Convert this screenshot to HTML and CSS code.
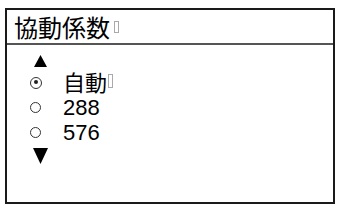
FILE: index.html
```html
<!DOCTYPE html>
<html lang="ja">
<head>
  <meta charset="UTF-8">
  <title>協動係数</title>
  <link rel="stylesheet" href="styles.css">
</head>
<body>
  <div class="panel">
    <div class="panel-title">
      <span>協動係数</span><span class="tofu"></span>
    </div>
    <div class="panel-body">
      <svg class="arrow arrow-up" width="13" height="12" viewBox="0 0 13 12"><polygon points="6.5,0 13,12 0,12" fill="#000"/></svg>
      <ul class="options">
        <li class="option selected"><span class="radio"></span><span class="label jp">自動</span><span class="tofu small"></span></li>
        <li class="option"><span class="radio"></span><span class="label">288</span></li>
        <li class="option"><span class="radio"></span><span class="label">576</span></li>
      </ul>
      <svg class="arrow arrow-down" width="15" height="16" viewBox="0 0 15 16"><polygon points="0,0 15,0 7.5,16" fill="#000"/></svg>
    </div>
  </div>
</body>
</html>
```

FILE: styles.css
```css
body {
  margin: 0;
  background: #fff;
  font-family: "Liberation Sans", "Noto Sans CJK JP", sans-serif;
  color: #111;
}

.panel {
  margin: 8px 0 0 5px;
  width: 326px;
  height: 192px;
  border: 2px solid #1a1a1a;
  display: flex;
  flex-direction: column;
}

.panel-title {
  height: 33px;
  border-bottom: 2px solid #555;
  display: flex;
  align-items: center;
  padding-left: 7px;
  font-family: "Noto Sans CJK JP", sans-serif;
  font-size: 24px;
  line-height: 1;
  color: #000;
}

.tofu {
  display: inline-block;
  width: 3px;
  height: 10px;
  border: 1px solid #aaa;
  margin-left: 4px;
}

.tofu.small {
  height: 12px;
  margin: 0 0 4px 1px;
}

.panel-body {
  padding: 10px 0 0 23px;
  display: flex;
  flex-direction: column;
}

.arrow-up {
  margin-left: 4px;
  margin-bottom: 3px;
}

.options {
  list-style: none;
  margin: 0;
  padding: 0;
}

.option {
  display: flex;
  align-items: center;
  height: 25px;
}

.radio {
  box-sizing: border-box;
  width: 11px;
  height: 11px;
  border: 1.5px solid #333;
  border-radius: 50%;
  margin-right: 22px;
  position: relative;
}

.selected .radio {
  width: 12px;
  height: 12px;
  margin-right: 21px;
}

.selected .radio::after {
  content: "";
  position: absolute;
  left: 2.5px;
  top: 2.5px;
  width: 4px;
  height: 4px;
  border-radius: 50%;
  background: #222;
}

.label {
  font-size: 22px;
  line-height: 1;
  color: #000;
}

.label.jp {
  font-family: "Noto Sans CJK JP", sans-serif;
  margin-bottom: 4px;
}

.arrow-down {
  margin-top: 3px;
  margin-left: 3px;
}
```
